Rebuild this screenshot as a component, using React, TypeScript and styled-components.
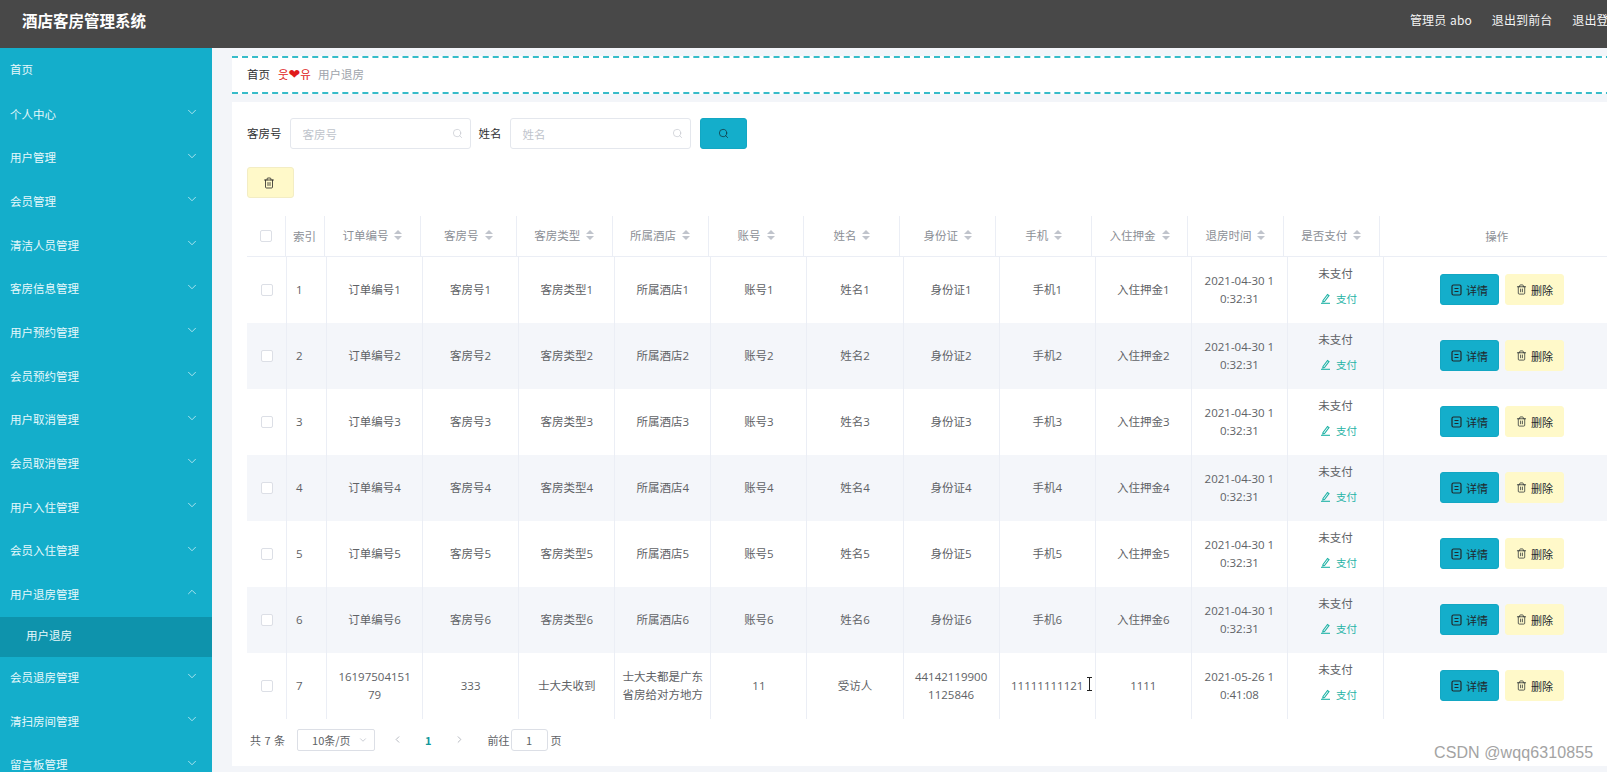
import React from "react";
import styled, { createGlobalStyle } from "styled-components";
import { ChevronDown, ChevronUp, ChevronLeft, ChevronRight, Search, Trash2 } from "lucide-react";

const Global = createGlobalStyle`
  html, body { margin: 0; padding: 0; background: #f3f5f9; }
  * { box-sizing: border-box; }
  body { font-family: "Noto Sans CJK SC", "Noto Sans", sans-serif; }
`;

const Page = styled.div`
  width: 1607px;
  height: 772px;
  overflow: hidden;
  position: relative;
  display: flex;
  flex-direction: column;
`;
const Header = styled.header`
  height: 48px;
  flex: none;
  background: #484848;
  color: #fff;
  display: flex;
  align-items: center;
  padding-left: 22px;
  white-space: nowrap;
`;
const Title = styled.div`
  font-size: 15.5px;
  font-weight: 700;
  flex: none;
  width: 1388px;
  margin-top: -8px;
`;
const HeaderLink = styled.span`
  font-size: 12px;
  color: #f4f4f4;
  margin-right: 20px;
  margin-top: -10px;
  flex: none;
  word-spacing: 1px;
  letter-spacing: 0.1px;
`;
const Body = styled.div`
  flex: 1;
  display: flex;
  min-height: 0;
`;
const Sidebar = styled.nav`
  width: 212px;
  flex: none;
  background: #14aecb;
  overflow: hidden;
  color: #e6f8fb;
  font-size: 11.5px;
`;
const HomeItem = styled.div`
  height: 45.3px;
  padding: 0 0 4px 10px;
  display: flex;
  align-items: center;
`;
const MenuItem = styled.div`
  height: 43.67px;
  padding: 0 13px 3px 10px;
  display: flex;
  align-items: center;
  justify-content: space-between;
  svg { margin-top: -3px; color: #c9eef5; }
`;
const SubItem = styled.div`
  height: 39.5px;
  padding: 0 0 3px 26px;
  background: #0e93ac;
  display: flex;
  align-items: center;
`;
const Main = styled.main`
  flex: none;
  width: 1420px;
  padding: 8px 0 0 20px;
  overflow: hidden;
`;
const Crumbs = styled.div`
  height: 38px;
  background: #fff;
  border-top: 2px dashed #37bcc9;
  border-bottom: 2px dashed #37bcc9;
  display: flex;
  align-items: center;
  padding: 0 0 2px 15px;
  font-size: 11.5px;
  color: #303133;
`;
const Heart = styled.span`
  color: #e01b1b;
  margin: 0 7px 0 8px;
  font-size: 11.5px;
  display: inline-flex;
  align-items: center;
  font-family: "Noto Sans CJK KR", "DejaVu Sans", sans-serif;
`;
const BigHeart = styled.span`
  font-size: 14px;
  line-height: 1;
  font-family: "DejaVu Sans", sans-serif;
`;
const Current = styled.span`
  color: #a0a4ac;
`;
const Card = styled.section`
  margin-top: 8px;
  height: 664px;
  background: #fff;
  padding: 16px 0 0 15px;
`;
const SearchBar = styled.div`
  display: flex;
  align-items: center;
  height: 31px;
  font-size: 11.5px;
  color: #303133;
`;
const FieldLabel = styled.label`
  margin-right: 8px;
  margin-bottom: 1px;
  &:not(:first-child) { margin-left: 8px; }
`;
const InputBox = styled.div`
  width: 181px;
  height: 31px;
  border: 1px solid #e4e7ed;
  border-radius: 3px;
  display: flex;
  align-items: center;
  justify-content: space-between;
  padding: 0 7px 0 12px;
  color: #c0c4cc;
  font-size: 11.5px;
  background: #fff;
`;
const SearchButton = styled.button`
  width: 47px;
  height: 31px;
  margin-left: 9px;
  border: 1px solid #13a7c3;
  border-radius: 3px;
  background: #14aecb;
  color: #12323a;
  display: flex;
  align-items: center;
  justify-content: center;
  padding: 0;
`;
const BulkDelete = styled.button`
  width: 47px;
  height: 31px;
  margin-top: 18px;
  border: 1px solid #f3edc4;
  border-radius: 3px;
  background: #fff9c9;
  color: #222;
  display: flex;
  align-items: center;
  justify-content: center;
  padding: 0 4px 0 0;
`;
const Table = styled.div`
  margin-top: 18px;
  width: 1375px;
  font-family: "Open Sans", "Noto Sans CJK SC", sans-serif;
  font-size: 11.5px;
  color: #606266;
`;
const HeadRow = styled.div`
  height: 41px;
  display: grid;
  grid-template-columns: 39px 39px repeat(11, 95.9px) 234px;
  border-bottom: 1px solid #ebeef5;
  color: #8c8f96;
`;
const HeadCell = styled.div<{ $raised?: boolean; $start?: boolean }>`
  border-right: 1px solid #ebeef5;
  display: flex;
  align-items: center;
  justify-content: ${(p) => (p.$start ? "flex-start" : "center")};
  padding-left: ${(p) => (p.$start ? "7px" : "0")};
  padding-bottom: ${(p) => (p.$raised ? "3px" : "0")};
  &:last-child { border-right: none; }
`;
const Sorter = styled.span`
  display: inline-flex;
  flex-direction: column;
  gap: 2px;
  margin-left: 6px;
  &::before, &::after {
    content: "";
    width: 0;
    height: 0;
    border-left: 4px solid transparent;
    border-right: 4px solid transparent;
  }
  &::before { border-bottom: 4px solid #c0c4cc; }
  &::after { border-top: 4px solid #c0c4cc; }
`;
const Row = styled.div<{ $even: boolean }>`
  height: 66px;
  display: grid;
  grid-template-columns: 40px 40px repeat(11, 96.1px) 238px;
  background: ${(p) => (p.$even ? "#f4f6fa" : "#fff")};
`;
const Cell = styled.div<{ $start?: boolean; $stack?: boolean }>`
  position: relative;
  border-right: 1px solid #ebeef5;
  display: flex;
  flex-direction: ${(p) => (p.$stack ? "column" : "row")};
  align-items: center;
  justify-content: ${(p) => (p.$start ? "flex-start" : "center")};
  padding: ${(p) => (p.$start ? "0 0 1px 9px" : p.$stack ? "0 0 8px" : "0 0 1px")};
  text-align: center;
  line-height: 18px;
  white-space: pre-line;
  &:last-child { border-right: none; }
`;
const Check = styled.span`
  display: block;
  width: 12px;
  height: 12px;
  border: 1px solid #dcdfe6;
  border-radius: 2px;
  background: #fff;
`;
const Unpaid = styled.div`
  margin-bottom: 7px;
`;
const PayLink = styled.div`
  color: #1fb3a6;
  font-size: 10.5px;
  display: flex;
  align-items: center;
  gap: 5px;
  padding-left: 6px;
`;
const Actions = styled.div`
  display: flex;
  gap: 6px;
  padding-right: 2px;
`;
const ActionButton = styled.button<{ $primary?: boolean }>`
  width: 59px;
  height: 31px;
  border: 1px solid ${(p) => (p.$primary ? "#13a7c3" : "#fff9c9")};
  border-radius: 3px;
  background: ${(p) => (p.$primary ? "#14aecb" : "#fff9c9")};
  color: #20282c;
  font-family: "Noto Sans CJK SC", sans-serif;
  font-size: 11px;
  display: flex;
  align-items: center;
  justify-content: center;
  gap: 4px;
  padding: 0;
`;
const Cursor = styled.svg`
  position: absolute;
  right: 2px;
  top: 24px;
`;
const Pager = styled.div`
  height: 47px;
  display: flex;
  align-items: center;
  padding: 0 0 6px 3px;
  font-size: 11px;
  color: #606266;
  font-family: "Noto Sans CJK SC", sans-serif;
`;
const Total = styled.span`
  word-spacing: 1px;
`;
const PageSize = styled.div`
  width: 78px;
  height: 22px;
  margin-left: 12px;
  border: 1px solid #dcdfe6;
  border-radius: 2px;
  display: flex;
  align-items: center;
  justify-content: space-between;
  padding: 0 6px 0 14px;
`;
const PageArrow = styled.span<{ $gap: number }>`
  display: flex;
  margin-left: ${(p) => p.$gap}px;
  color: #b0b4bb;
`;
const PageNo = styled.span`
  margin-left: 22px;
  color: #11989c;
  font-weight: 700;
`;
const GotoLabel = styled.span`
  margin-left: 23px;
`;
const GotoBox = styled.div`
  width: 37px;
  height: 22px;
  margin: 0 3px 0 1px;
  border: 1px solid #dcdfe6;
  border-radius: 3px;
  display: flex;
  align-items: center;
  justify-content: center;
`;
const Watermark = styled.div`
  position: absolute;
  left: 1434px;
  top: 744px;
  font-family: "Liberation Sans", sans-serif;
  font-size: 16px;
  color: #a3a3a3;
  letter-spacing: 0.1px;
  white-space: nowrap;
`;

const TicketIcon = () => (
  <svg width="11" height="12" viewBox="0 0 11 12" fill="none" stroke="currentColor" strokeWidth="1.2">
    <rect x="1" y="1" width="9" height="10" rx="1.5" />
    <path d="M3.5 4.5h4M3.5 7.5h4" />
  </svg>
);
const EditIcon = () => (
  <svg width="11" height="11" viewBox="0 0 11 11" fill="none" stroke="currentColor" strokeWidth="1.1">
    <path d="M3 7.5 L7.5 1.5 L9 2.7 L4.5 8.6 L2.8 9 Z" />
    <path d="M1 10.3h9" />
  </svg>
);

const menus = ["个人中心", "用户管理", "会员管理", "清洁人员管理", "客房信息管理", "用户预约管理", "会员预约管理", "用户取消管理", "会员取消管理", "用户入住管理", "会员入住管理"];
const menusAfter = ["会员退房管理", "清扫房间管理", "留言板管理"];
const heads = ["订单编号", "客房号", "客房类型", "所属酒店", "账号", "姓名", "身份证", "手机", "入住押金", "退房时间", "是否支付"];
const prefixes = heads.slice(0, 9);

const rows: string[][] = [1, 2, 3, 4, 5, 6].map((n) => [
  ...prefixes.map((p) => `${p}${n}`),
  "2021-04-30 1\n0:32:31",
]);
rows.push([
  "16197504151\n79", "333", "士大夫收到", "士大夫都是广东\n省房给对方地方", "11", "受访人",
  "44142119900\n1125846", "11111111121", "1111", "2021-05-26 1\n0:41:08",
]);

export default function App() {
  return (
    <Page>
      <Global />
      <Header>
        <Title>酒店客房管理系统</Title>
        <HeaderLink>管理员 abo</HeaderLink>
        <HeaderLink>退出到前台</HeaderLink>
        <HeaderLink>退出登录</HeaderLink>
      </Header>
      <Body>
        <Sidebar>
          <HomeItem>首页</HomeItem>
          {menus.map((m) => (
            <MenuItem key={m}>{m}<ChevronDown size={14} strokeWidth={1.4} /></MenuItem>
          ))}
          <MenuItem>用户退房管理<ChevronUp size={14} strokeWidth={1.4} /></MenuItem>
          <SubItem>用户退房</SubItem>
          {menusAfter.map((m) => (
            <MenuItem key={m}>{m}<ChevronDown size={14} strokeWidth={1.4} /></MenuItem>
          ))}
        </Sidebar>
        <Main>
          <Crumbs>
            首页<Heart>웃<BigHeart>❤</BigHeart>유</Heart><Current>用户退房</Current>
          </Crumbs>
          <Card>
            <SearchBar>
              <FieldLabel>客房号</FieldLabel>
              <InputBox>客房号<Search size={11} strokeWidth={1.4} /></InputBox>
              <FieldLabel>姓名</FieldLabel>
              <InputBox>姓名<Search size={11} strokeWidth={1.4} /></InputBox>
              <SearchButton><Search size={11} strokeWidth={1.6} /></SearchButton>
            </SearchBar>
            <BulkDelete><Trash2 size={12} strokeWidth={1.6} /></BulkDelete>
            <Table>
              <HeadRow>
                <HeadCell><Check /></HeadCell>
                <HeadCell $start>索引</HeadCell>
                {heads.map((h) => (
                  <HeadCell key={h} $raised>{h}<Sorter /></HeadCell>
                ))}
                <HeadCell>操作</HeadCell>
              </HeadRow>
              {rows.map((r, i) => (
                <Row key={i} $even={i % 2 === 1}>
                  <Cell><Check /></Cell>
                  <Cell $start>{i + 1}</Cell>
                  {r.map((c, j) => (
                    <Cell key={j}>
                      {c}
                      {i === 6 && j === 7 && (
                        <Cursor width="7" height="14" viewBox="0 0 7 14" fill="none" stroke="#222" strokeWidth="1">
                          <path d="M1 .5h5M3.5 .5v13M1 13.5h5" />
                        </Cursor>
                      )}
                    </Cell>
                  ))}
                  <Cell $stack>
                    <Unpaid>未支付</Unpaid>
                    <PayLink><EditIcon />支付</PayLink>
                  </Cell>
                  <Cell>
                    <Actions>
                      <ActionButton $primary><TicketIcon />详情</ActionButton>
                      <ActionButton><Trash2 size={11} strokeWidth={1.6} />删除</ActionButton>
                    </Actions>
                  </Cell>
                </Row>
              ))}
              <Pager>
                <Total>共 7 条</Total>
                <PageSize>10条/页<ChevronDown size={10} color="#c0c4cc" /></PageSize>
                <PageArrow $gap={17}><ChevronLeft size={11} /></PageArrow>
                <PageNo>1</PageNo>
                <PageArrow $gap={22}><ChevronRight size={11} /></PageArrow>
                <GotoLabel>前往</GotoLabel>
                <GotoBox>1</GotoBox>
                页
              </Pager>
            </Table>
          </Card>
        </Main>
      </Body>
      <Watermark>CSDN @wqq6310855</Watermark>
    </Page>
  );
}
